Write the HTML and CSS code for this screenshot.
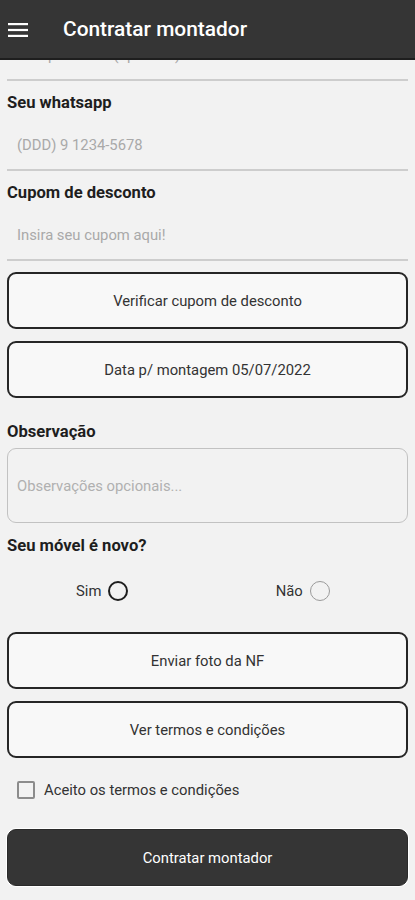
FILE: index.html
```html
<!DOCTYPE html>
<html lang="pt-BR">
<head>
<meta charset="utf-8">
<title>Contratar montador</title>
<link rel="stylesheet" href="styles.css">
</head>
<body>
<header class="appbar">
  <svg class="menu-icon" width="20" height="14" viewBox="0 0 20 14" aria-hidden="true">
    <rect x="0" y="0" width="20" height="2.2" fill="#fff"/>
    <rect x="0" y="5.9" width="20" height="2.2" fill="#fff"/>
    <rect x="0" y="11.8" width="20" height="2.2" fill="#fff"/>
  </svg>
  <h1 class="appbar-title">Contratar montador</h1>
</header>

<main class="content">
  <div class="field field-first">
    <div class="input">Complemento (opcional)</div>
  </div>
  <div class="field">
    <div class="label">Seu whatsapp</div>
    <div class="input">(DDD) 9 1234-5678</div>
  </div>
  <div class="field">
    <div class="label">Cupom de desconto</div>
    <div class="input">Insira seu cupom aqui!</div>
  </div>

  <button class="btn btn-first">Verificar cupom de desconto</button>
  <button class="btn">Data p/ montagem 05/07/2022</button>

  <div class="label label-obs">Observação</div>
  <div class="textarea">Observações opcionais...</div>

  <div class="label label-novo">Seu móvel é novo?</div>
  <div class="radios">
    <div class="radio-opt"><span>Sim</span><span class="radio radio-on"></span></div>
    <div class="radio-opt"><span>Não</span><span class="radio"></span></div>
  </div>

  <button class="btn btn-nf">Enviar foto da NF</button>
  <button class="btn">Ver termos e condições</button>

  <label class="check-row"><span class="checkbox"></span><span>Aceito os termos e condições</span></label>

  <button class="btn btn-dark">Contratar montador</button>
</main>
</body>
</html>
```

FILE: styles.css
```css
* { box-sizing: border-box; }
html, body {
  margin: 0;
  padding: 0;
  background: #f2f2f2;
  font-family: Roboto, "Liberation Sans", Arial, sans-serif;
  color: #222;
  overflow: hidden;
  height: 900px;
}
.appbar {
  position: fixed;
  top: 0; left: 0; right: 0;
  height: 60px;
  background: #353535;
  border-bottom: 2px solid #1e1e1e;
  display: flex;
  align-items: center;
  padding-left: 8px;
  z-index: 5;
}
.menu-icon { display: block; margin-top: 2px; flex: none; }
.appbar-title {
  margin: 0 0 0 35px;
  color: #fff;
  font-size: 20.9px;
  font-weight: 500;
  line-height: 24px;
}
.content {
  display: block;
  padding: 0 7px;
}
.field {
  padding-top: 12px;
  border-bottom: 2px solid #cdcdcd;
}
.field.field-first { padding-top: 31px; }
.label {
  font-size: 16.6px;
  font-weight: 700;
  line-height: 20px;
  color: #1e1e1e;
  margin-bottom: 8px;
}
.input {
  height: 48px;
  display: flex;
  align-items: center;
  padding-left: 10px;
  font-size: 14.8px;
  color: #a9a9a9;
}
.btn {
  display: block;
  height: 57px;
  margin-top: 12px;
  border: 2px solid #262626;
  border-radius: 9px;
  background: #f8f8f8;
  font-family: inherit;
  font-size: 14.8px;
  color: #333;
  padding: 0;
  width: 100%;
}
.btn-first { margin-top: 11px; }
.label-obs { margin-top: 24px; margin-bottom: 6px; }
.textarea {
  height: 75px;
  border: 1.5px solid #c2c2c2;
  border-radius: 9px;
  display: flex;
  align-items: center;
  padding-left: 9px;
  font-size: 14.8px;
  color: #b0b0b0;
}
.label.label-novo { margin-top: 13px; margin-bottom: 0; }
.radios {
  margin-top: 23px;
  height: 24px;
  display: grid;
  grid-template-columns: 1fr 1fr;
}
.radio-opt {
  display: flex;
  align-items: center;
  justify-content: center;
  gap: 7px;
  padding-right: 10px;
  font-size: 14.8px;
  color: #333;
}
.radio {
  width: 20px;
  height: 20px;
  border-radius: 50%;
  border: 1.5px solid #9a9a9a;
}
.radio-on { border: 2px solid #1e1e1e; }
.btn-nf { margin-top: 29px; }
.check-row {
  margin-top: 22px;
  height: 20px;
  display: flex;
  align-items: center;
  gap: 9px;
  padding-left: 10px;
  font-size: 14.8px;
  color: #333;
}
.checkbox {
  width: 18px;
  height: 18px;
  border: 2px solid #8c8c8c;
  border-radius: 2px;
}
.btn.btn-dark {
  margin-top: 29px;
  background: #353535;
  color: #fff;
  border: 1px solid #2a2a2a;
  box-shadow: 0 0 0 1px #fff;
}
```
